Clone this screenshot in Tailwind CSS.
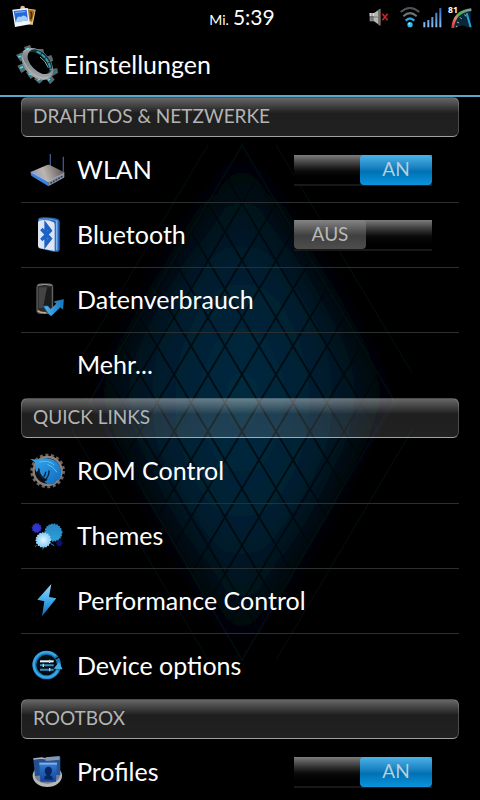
<!DOCTYPE html>
<html lang="de">
<head>
    <meta charset="UTF-8">
    <meta name="viewport" content="width=device-width, initial-scale=1.0">
    <title>Einstellungen</title>
    <script src="https://cdn.jsdelivr.net/npm/@tailwindcss/browser@4"></script>
</head>
<body class="bg-black text-white font-['Lato','Open_Sans',sans-serif]">
    <div class="relative isolate flex h-screen flex-col overflow-hidden">

        <!-- Hintergrund: blaues Rautenmuster -->
        <svg class="absolute inset-0 -z-10 h-full w-full" viewBox="0 0 480 800" preserveAspectRatio="xMidYMid slice" aria-hidden="true">
            <defs>
                <radialGradient id="glow">
                    <stop offset="0" stop-color="#012c42"/>
                    <stop offset=".45" stop-color="#012135"/>
                    <stop offset="1" stop-color="#000a10"/>
                </radialGradient>
                <pattern id="net" x="225" y="175" width="34" height="57" patternUnits="userSpaceOnUse">
                    <path d="M0 0 34 57M34 0 0 57M-2 3 2 -3M32 60 36 54M-2 54 2 60M32 -3 36 3" stroke="#000508" stroke-opacity=".75" stroke-width="2"/>
                </pattern>
                <filter id="soft" x="-30%" y="-30%" width="160%" height="160%"><feGaussianBlur stdDeviation="18"/></filter>
            </defs>
            <path d="M242 155 382 392 242 645 102 392z" fill="url(#glow)" filter="url(#soft)"/>
            <path d="M242 140 400 400 242 665 84 400z" fill="url(#net)"/>
            <g fill="none" stroke="#0e333f" stroke-opacity=".3">
                <path d="M242 145 90 400 242 660 394 400z"/>
                <path d="M208 145 72 373M276 145 412 373M72 430 208 660M412 430 276 660"/>
            </g>
        </svg>

        <!-- Statusleiste -->
        <div class="grid h-[34px] shrink-0 grid-cols-[1fr_auto_1fr] items-center bg-black pr-2 pl-3">
            <svg class="h-6 w-6" viewBox="0 0 72 72" role="img" aria-label="Galerie">
                <path d="M26 8 71 14 62 60 20 52z" fill="#e8c88a"/>
                <path d="M40 12 68 17 60 50 38 44z" fill="#a46a1c"/>
                <path d="M56 20q6 8 0 22" stroke="#4a2a08" stroke-width="5" fill="none"/>
                <circle cx="32" cy="9" r="7" fill="#dbb9a8"/>
                <path d="M1 14 47 9 54 58 9 66z" fill="#f2f5fc"/>
                <path d="M5 18 44 14 48 46 11 52z" fill="#2469dc"/>
                <path d="M13 45q4-14 14-9 8-11 20 3l1 7-37 6z" fill="#a9cdfa"/>
                <path d="M9 23 40 19" stroke="#78a9f0" stroke-width="4"/>
            </svg>
            <div class="flex items-baseline gap-1 pb-0.5 leading-none">
                <span class="text-[14px]">Mi.</span>
                <span class="text-[21px]">5:39</span>
            </div>
            <div class="flex items-center justify-end">
                <svg class="mr-[11px] h-5 w-5" viewBox="0 0 60 60" role="img" aria-label="Stumm">
                    <path d="M2 18h13v25H2z" fill="#8d8d8d"/>
                    <path d="M2 18h13v9H2z" fill="#d6d6d6"/>
                    <path d="M15 18 34 5v51L15 43z" fill="#b9b6b2"/>
                    <path d="M27 10 34 5v51l-7-5z" fill="#77736f"/>
                    <path d="M2 30h24M9 18v24" stroke="#555" stroke-width="2"/>
                    <path d="M40 20 56 40M56 20 40 40" stroke="#c2262b" stroke-width="5"/>
                </svg>
                <svg class="mr-[3px] h-[22px] w-5" viewBox="0 0 60 66" fill="none" role="img" aria-label="WLAN-Signal">
                    <path d="M2 18Q30-6 58 18" stroke="#4e5355" stroke-width="6"/>
                    <path d="M10 31Q30 12 50 31" stroke="#6b7375" stroke-width="6"/>
                    <path d="M17 44Q30 31 43 44" stroke="#2a9fe0" stroke-width="7"/>
                    <circle cx="30" cy="56" r="8" fill="#35bdea"/>
                    <circle cx="28" cy="53" r="3" fill="#a4ecff"/>
                </svg>
                <svg class="mr-[6px] h-[22px] w-[19px]" viewBox="0 0 57 66" role="img" aria-label="Mobilfunksignal">
                    <defs><linearGradient id="bar" x2="0" y2="1"><stop stop-color="#2b67c4"/><stop offset="1" stop-color="#8fc0f5"/></linearGradient></defs>
                    <path d="M1 48h6v16H1zM13 42h6v22h-6zM25 33h6v31h-6zM37 20h6v44h-6zM49 6h6v58h-6z" fill="url(#bar)"/>
                </svg>
                <svg class="h-[26px] w-6" viewBox="0 0 72 78" role="img" aria-label="Akku 81 Prozent">
                    <defs>
                        <linearGradient id="arc" x1="0" y1="1" x2="1" y2="0"><stop stop-color="#e02848"/><stop offset=".35" stop-color="#e08a6a"/><stop offset=".55" stop-color="#4cae58"/><stop offset="1" stop-color="#8a9aa4"/></linearGradient>
                    </defs>
                    <path d="M16 72Q18 26 68 18V70H58Q42 58 26 72z" fill="#06283a"/>
                    <path d="M14 72Q18 22 70 17" fill="none" stroke="url(#arc)" stroke-width="8"/>
                    <path d="M24 68l4-2M27 54l6 3M36 40l5 5M50 31l3 6" stroke="#d3b49a" stroke-width="3"/>
                    <path d="M56 28 68 70" stroke="#2e9fd6" stroke-width="6"/>
                    <text x="0" y="26" font-family="Open Sans, sans-serif" font-weight="700" font-size="26" fill="#fff">81</text>
                </svg>
            </div>
        </div>

        <!-- Titel -->
        <header class="flex h-[63px] shrink-0 items-center gap-1.5 border-b-2 border-[#5ba6c9] bg-black pl-4">
            <svg class="h-10 w-[42px]" viewBox="0 0 126 120" aria-hidden="true">
                <defs>
                    <linearGradient id="steel" x2="1" y2="1"><stop stop-color="#b9bec0"/><stop offset=".45" stop-color="#7a8083"/><stop offset=".8" stop-color="#a3a7a9"/><stop offset="1" stop-color="#5c6366"/></linearGradient>
                </defs>
                <g fill="#5f686c">
                    <path d="M24 6 42 0l8 18-20 8zM64 12 82 12l4 20-18 4zM88 36l18-6 6 16-14 12zM104 72l20-2 2 14-18 10zM0 30l18-8 12 14-16 14zM4 62l20-8 10 18-18 12zM30 82l20-10 12 16-18 14zM54 102l18-14 14 14-16 14zM88 98l16-10 12 16-14 14z"/>
                </g>
                <g fill="#277a87">
                    <path d="M3 33 15 28l8 9-10 8zM9 65l12-4 5 9-11 7zM34 85l13-5 6 9-12 7zM60 103l11-7 7 7-10 7zM92 101l10-6 6 9-8 7zM110 76l10-1v6l-9 5zM28 9l11-4 4 9-10 4zM68 15l10 1 2 9-10 2z"/>
                </g>
                <ellipse cx="64" cy="57" rx="56" ry="38" transform="rotate(46 64 57)" fill="url(#steel)"/>
                <ellipse cx="72" cy="50" rx="44" ry="27" transform="rotate(46 72 50)" fill="#10343c"/>
                <ellipse cx="67" cy="54" rx="41" ry="21" transform="rotate(46 67 54)" fill="#000"/>
                <path d="M62 20Q96 34 105 76" fill="none" stroke="#3f9aa8" stroke-width="6" stroke-dasharray="14 3"/>
                <path d="M72 36Q88 46 97 68" fill="none" stroke="#6cc6cf" stroke-width="3"/>
                <path d="M20 20Q30 10 44 15M18 36Q28 72 62 94 80 104 96 98" stroke="#b4babc" stroke-width="3" fill="none"/>
                <g stroke="#75d6df" stroke-width="4">
                    <path d="M7 36l9-3M12 69l9-3M38 89l9-3M65 106l7-4M96 106l6-4M31 12l8-2"/>
                </g>
            </svg>
            <h1 class="pb-0.5 text-[25px] leading-8">Einstellungen</h1>
        </header>

        <main class="min-h-0 flex-1 overflow-y-auto px-[21px] [scrollbar-width:none]">
            <section>
                <h2 class="mb-px flex h-10 items-center rounded-md border border-white/20 border-b-white/40 bg-linear-to-b from-white/40 via-white/12 via-40% to-white/13 px-[11px] pb-0.5 text-[19px] text-[#b4b4b4]">DRAHTLOS &amp; NETZWERKE</h2>
                <ul>
                    <li class="flex h-[65px] items-center gap-3 border-b border-[#2b2f30] pr-[27px] pl-2">
                        <svg class="h-9 w-9 shrink-0" viewBox="0 0 108 108" aria-hidden="true">
                            <defs>
                                <linearGradient id="rtop" x1="0" y1=".6" x2="1" y2=".4"><stop stop-color="#7e98c4"/><stop offset=".4" stop-color="#bdb5b0"/><stop offset="1" stop-color="#5c5654"/></linearGradient>
                            </defs>
                            <path d="M64 6V48M103 14V62" stroke="#3d5687" stroke-width="4"/>
                            <path d="M5 60 58 89v14L8 72q-3-2-3-12z" fill="#3c7fe0"/>
                            <path d="M58 89 106 62v12q0 3-4 5L58 103z" fill="#8795a9"/>
                            <path d="M64 94 102 72" stroke="#39404c" stroke-width="5" stroke-dasharray="6 3"/>
                            <path d="M5 60 54 39q4-1 8 0l44 22-48 29z" fill="url(#rtop)"/>
                            <path d="M5 60 58 89 106 62" fill="none" stroke="#b9c8de" stroke-width="2"/>
                        </svg>
                        <label for="wlan" class="flex-1 pb-0.5 text-[25px] leading-8">WLAN</label>
                        <label class="flex h-[31px] w-[138px] cursor-pointer items-start border-b-2 border-[#181818] bg-linear-to-b from-[#7d7d7d] from-0% via-[#0c0c0c] via-55% to-black">
                            <input id="wlan" type="checkbox" checked class="peer sr-only">
                            <span class="hidden h-[29px] w-[72px] items-center justify-center rounded-sm bg-linear-to-b from-[#858585] via-[#3f3f3f] via-55% to-[#4e4e4e] text-[19px] text-[#b8b8b8] not-peer-checked:flex">AUS</span>
                            <span class="ml-auto hidden h-[30px] w-[72px] items-center justify-center rounded-sm bg-linear-to-b from-[#4bb4ea] from-0% via-[#0072b4] via-55% to-[#0c94dc] text-[19px] text-[#b5cfdd] peer-checked:flex">AN</span>
                        </label>
                    </li>
                    <li class="flex h-[65px] items-center gap-3 border-b border-[#2b2f30] pr-[27px] pl-2">
                        <svg class="h-9 w-9 shrink-0" viewBox="0 0 108 108" aria-hidden="true">
                            <path d="M27 8Q29 1 40 1Q72 0 86 6Q93 9 92 20V98Q92 104 84 105L72 104 30 94z" fill="#2563b4"/>
                            <path d="M83 10v90" stroke="#77b4f3" stroke-width="5"/>
                            <path d="M29 11Q56 6 74 16q3 2 3 8v78L33 94q-6-1-6-7V17z" fill="#dfe5f0"/>
                            <path d="M30 8Q60 2 82 12" stroke="#7f9fd8" stroke-width="3" fill="none"/>
                            <path d="M37 36 64 65 51 82V24L64 41 37 69" fill="none" stroke="#1c62c4" stroke-width="10"/>
                        </svg>
                        <label for="bluetooth" class="flex-1 pb-0.5 text-[25px] leading-8">Bluetooth</label>
                        <label class="flex h-[31px] w-[138px] cursor-pointer items-start border-b-2 border-[#181818] bg-linear-to-b from-[#7d7d7d] from-0% via-[#0c0c0c] via-55% to-black">
                            <input id="bluetooth" type="checkbox" class="peer sr-only">
                            <span class="hidden h-[29px] w-[72px] items-center justify-center rounded-sm bg-linear-to-b from-[#858585] via-[#3f3f3f] via-55% to-[#4e4e4e] text-[19px] text-[#b8b8b8] not-peer-checked:flex">AUS</span>
                            <span class="ml-auto hidden h-[30px] w-[72px] items-center justify-center rounded-sm bg-linear-to-b from-[#4bb4ea] from-0% via-[#0072b4] via-55% to-[#0c94dc] text-[19px] text-[#b5cfdd] peer-checked:flex">AN</span>
                        </label>
                    </li>
                    <li class="border-b border-[#2b2f30]">
                        <a href="#daten" class="flex h-16 items-center gap-3 pl-2 text-[25px] leading-8">
                            <svg class="h-9 w-9 shrink-0" viewBox="0 0 108 108" aria-hidden="true">
                                <defs><linearGradient id="arrow" x2="1" y2="0"><stop stop-color="#55b8f2"/><stop offset="1" stop-color="#1474bd"/></linearGradient></defs>
                                <path d="M24 14Q24 6 34 6H62Q71 6 71 14V88Q71 94 60 94H34Q24 94 24 88z" fill="#2c2c2c" stroke="#707070" stroke-width="3"/>
                                <path d="M29 16H66V78H29z" fill="#1c1c1c"/>
                                <path d="M29 16H54L42 78H29z" fill="#444"/>
                                <path d="M27 10Q47 4 68 10" stroke="#9c9c9c" stroke-width="3" fill="none"/>
                                <path d="M26 86Q34 93 52 92" stroke="#b8aa90" stroke-width="5" fill="none"/>
                                <path d="M44 73 56 72 65 82 83 65 76 59 103 53 101 81 94 75 67 101 60 97z" fill="url(#arrow)" stroke="#2b93da" stroke-width="2"/>
                            </svg>
                            <span class="pb-0.5">Datenverbrauch</span>
                        </a>
                    </li>
                    <li>
                        <a href="#mehr" class="flex h-16 items-center pl-14 text-[25px] leading-8 mb-px"><span class="pb-0.5">Mehr...</span></a>
                    </li>
                </ul>
            </section>

            <section>
                <h2 class="mb-px flex h-10 items-center rounded-md border border-white/20 border-b-white/40 bg-linear-to-b from-white/40 via-white/12 via-40% to-white/13 px-[11px] pb-0.5 text-[19px] text-[#b4b4b4]">QUICK LINKS</h2>
                <ul>
                    <li class="border-b border-[#2b2f30]">
                        <a href="#rom" class="flex h-16 items-center gap-3 pl-2 text-[25px] leading-8">
                            <svg class="h-9 w-9 shrink-0" viewBox="0 0 108 108" aria-hidden="true">
                                <defs><linearGradient id="horse" x2="1" y2="1"><stop stop-color="#37aaf0"/><stop offset="1" stop-color="#1169bb"/></linearGradient></defs>
                                <circle cx="56" cy="54" r="47" fill="none" stroke="#6d6561" stroke-width="10" stroke-dasharray="9 7.4"/>
                                <circle cx="56" cy="54" r="42" fill="#0b1016" stroke="#8a7f79" stroke-width="7"/>
                                <path d="M4 17 25 21Q44 12 65 18 88 24 95 47 98 68 92 80L80 83Q82 91 68 94 54 95 46 86L56 80Q34 74 31 48L22 58 18 46Q24 32 15 26z" fill="url(#horse)"/>
                                <path d="M29 46Q28 66 44 78M60 52Q61 66 51 78M50 56Q50 66 44 72" fill="none" stroke="#06213a" stroke-width="4"/>
                                <path d="M31 27Q58 20 76 36M55 34Q74 40 84 58" fill="none" stroke="#5cbff5" stroke-width="3"/>
                            </svg>
                            <span class="pb-0.5">ROM Control</span>
                        </a>
                    </li>
                    <li class="border-b border-[#2b2f30]">
                        <a href="#themes" class="flex h-16 items-center gap-3 pl-2 text-[25px] leading-8">
                            <svg class="h-9 w-9 shrink-0" viewBox="0 0 108 108" aria-hidden="true">
                                <defs>
                                    <radialGradient id="splatA"><stop stop-color="#dff8ff"/><stop offset="1" stop-color="#8ccdf4"/></radialGradient>
                                    <linearGradient id="splatB" x2="0" y2="1"><stop stop-color="#2b83c0"/><stop offset="1" stop-color="#28a4dc"/></linearGradient>
                                </defs>
                                <g stroke-linecap="round" stroke-dasharray="1 7">
                                    <circle cx="23" cy="30" r="13" fill="#3232cc" stroke="#3232cc" stroke-width="4"/>
                                    <circle cx="91" cy="76" r="8" fill="#101078" stroke="#101078" stroke-width="4"/>
                                    <circle cx="73" cy="44" r="25" fill="url(#splatB)" stroke="#2890cc" stroke-width="5"/>
                                    <circle cx="43" cy="66" r="21" fill="url(#splatA)" stroke="#9ed9f8" stroke-width="5"/>
                                </g>
                                <path d="M66 77l10 6M23 82l-5 4M43 89l-2 5" stroke="#238dc8" stroke-width="3"/>
                            </svg>
                            <span class="pb-0.5">Themes</span>
                        </a>
                    </li>
                    <li class="border-b border-[#2b2f30]">
                        <a href="#performance" class="flex h-16 items-center gap-3 pl-2 text-[25px] leading-8">
                            <svg class="h-9 w-9 shrink-0" viewBox="0 0 108 108" aria-hidden="true">
                                <defs><linearGradient id="bolt" x2="0" y2="1"><stop stop-color="#a5d8f5"/><stop offset=".45" stop-color="#48b1ee"/><stop offset="1" stop-color="#0c69b4"/></linearGradient></defs>
                                <path d="M67 3 25 50 46 55 39 100 82 46 60 42z" fill="url(#bolt)"/>
                            </svg>
                            <span class="pb-0.5">Performance Control</span>
                        </a>
                    </li>
                    <li>
                        <a href="#device" class="mb-px flex h-16 items-center gap-3 pl-2 text-[25px] leading-8">
                            <svg class="h-9 w-9 shrink-0" viewBox="0 0 108 108" aria-hidden="true">
                                <circle cx="53" cy="51" r="37" fill="#020c14" stroke="#1b75b4" stroke-width="12"/>
                                <path d="M80 24A38 38 0 1 0 86 68" fill="none" stroke="#38a6e4" stroke-width="7"/>
                                <path d="M74 62 90 42 101 64z" fill="#45acdf"/>
                                <path d="M79 33 91 27" stroke="#000" stroke-width="4"/>
                                <path d="M33 52H74M33 65H74" stroke="#3a8fbe" stroke-width="6"/>
                                <path d="M33 40H74" stroke="#e9f6fd" stroke-width="6"/>
                                <path d="M62 35v10M43 47v10M62 60v10" stroke="#a6dcf6" stroke-width="4"/>
                            </svg>
                            <span class="pb-0.5">Device options</span>
                        </a>
                    </li>
                </ul>
            </section>

            <section>
                <h2 class="mb-px flex h-10 items-center rounded-md border border-white/20 border-b-white/40 bg-linear-to-b from-white/40 via-white/12 via-40% to-white/13 px-[11px] pb-0.5 text-[19px] text-[#b4b4b4]">ROOTBOX</h2>
                <ul>
                    <li class="flex h-16 items-center gap-3 pr-[27px] pl-2">
                        <svg class="h-9 w-9 shrink-0" viewBox="0 0 108 108" aria-hidden="true">
                            <defs><linearGradient id="card" x2="0" y2="1"><stop stop-color="#347bd6"/><stop offset="1" stop-color="#1245a0"/></linearGradient></defs>
                            <ellipse cx="55" cy="65" rx="44" ry="34" fill="#b5b8bd"/>
                            <ellipse cx="55" cy="62" rx="38" ry="27" fill="#77808c"/>
                            <path d="M13 16 38 13 58 17V62L18 66z" fill="#244f8e"/>
                            <path d="M13 15 38 12 58 16" stroke="#aab4c5" stroke-width="4" fill="none"/>
                            <path d="M50 10 90 6 94 10V64L54 60z" fill="#28538f"/>
                            <path d="M50 10 92 7V17L50 21z" fill="#8997ac"/>
                            <path d="M31 26H84L81 83H34z" fill="url(#card)"/>
                            <path d="M31 26H84V32H31z" fill="#82aee5"/>
                            <path d="M45 76Q46 66 53 64Q46 58 47 48Q50 38 58 38Q67 38 69 48Q69 58 63 64Q71 67 72 77z" fill="#06265e"/>
                        </svg>
                        <label for="profiles" class="flex-1 pb-0.5 text-[25px] leading-8">Profiles</label>
                        <label class="flex h-[31px] w-[138px] cursor-pointer items-start border-b-2 border-[#181818] bg-linear-to-b from-[#7d7d7d] from-0% via-[#0c0c0c] via-55% to-black">
                            <input id="profiles" type="checkbox" checked class="peer sr-only">
                            <span class="hidden h-[29px] w-[72px] items-center justify-center rounded-sm bg-linear-to-b from-[#858585] via-[#3f3f3f] via-55% to-[#4e4e4e] text-[19px] text-[#b8b8b8] not-peer-checked:flex">AUS</span>
                            <span class="ml-auto hidden h-[30px] w-[72px] items-center justify-center rounded-sm bg-linear-to-b from-[#4bb4ea] from-0% via-[#0072b4] via-55% to-[#0c94dc] text-[19px] text-[#b5cfdd] peer-checked:flex">AN</span>
                        </label>
                    </li>
                </ul>
            </section>
        </main>
    </div>
</body>
</html>
